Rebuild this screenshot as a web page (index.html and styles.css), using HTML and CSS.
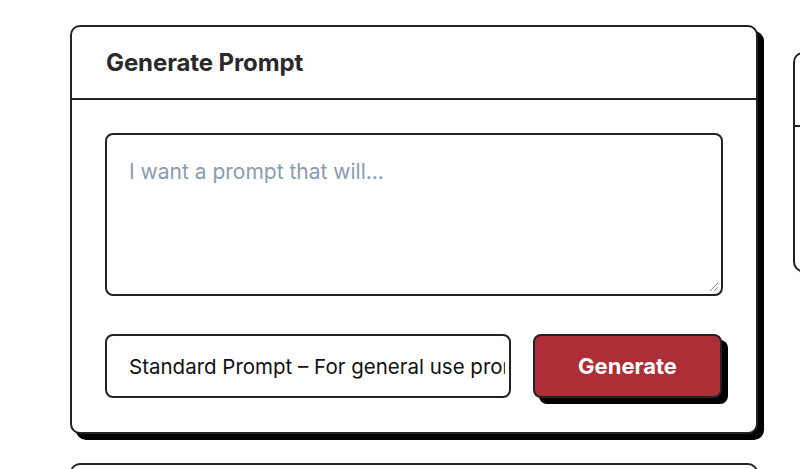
FILE: index.html
```html
<!DOCTYPE html>
<html>
<head>
<meta charset="utf-8">
<link rel="stylesheet" href="styles.css">
</head>
<body>
<div class="page">
  <div class="row">
    <section class="card main">
      <header class="card-head"><h2>Generate Prompt</h2></header>
      <div class="card-body">
        <div class="textarea"><span class="placeholder">I want a prompt that will...</span><span class="grip"></span></div>
        <div class="controls">
          <div class="select"><span>Standard Prompt – For general use prompts</span></div>
          <button class="btn">Generate</button>
        </div>
      </div>
    </section>
    <section class="card side">
      <header class="card-head side-head"></header>
    </section>
  </div>
  <section class="card lower"></section>
</div>
</body>
</html>
```
FILE: styles.css
```css
* { box-sizing: border-box; }
html, body { margin: 0; padding: 0; background: #fff; overflow: hidden; }
body { font-family: Inter, "Noto Sans", sans-serif; color: #222; }
.page { padding: 25px 0 0 70px; width: 800px; height: 469px; overflow: hidden; }
.row { display: flex; gap: 35px; align-items: flex-start; }
.card {
  background: #fff;
  border: 2px solid #222;
  border-radius: 10px;
  box-shadow: 6px 6px 0 #000;
  flex-shrink: 0;
}
.main { width: 688px; }
.card-head { border-bottom: 2px solid #222; height: 73px; display: flex; align-items: center; padding-left: 34px; }
.card-head h2 { margin: 0; font-size: 24px; font-weight: 700; color: #2a2a2a; letter-spacing: -0.1px; }
.card-body { padding: 33px 33px 34px; }
.textarea {
  position: relative;
  height: 163px;
  border: 2px solid #222;
  border-radius: 8px;
  padding: 24px 22px;
}
.placeholder { font-size: 21px; color: #8a9bb0; }
.grip {
  position: absolute; right: 3px; bottom: 3px; width: 8px; height: 8px;
  background: linear-gradient(135deg, transparent 45%, #888 45%, #888 55%, transparent 55%, transparent 70%, #888 70%, #888 80%, transparent 80%);
}
.controls { display: flex; gap: 22px; margin-top: 38px; }
.select {
  width: 406px; height: 64px;
  border: 2px solid #222; border-radius: 8px;
  padding: 0 4px 0 22px;
  display: flex; align-items: center;
  overflow: hidden; white-space: nowrap;
  font-size: 20.5px; color: #111;
}
.select span { overflow: hidden; display: block; width: 100%; }
.btn {
  width: 189px; height: 64px;
  background: #ad2e36; color: #fff;
  border: 2px solid #222; border-radius: 8px;
  box-shadow: 6px 6px 0 #000;
  font-family: Inter, "Noto Sans", sans-serif;
  font-size: 22px; font-weight: 700;
}
.side { width: 300px; margin-top: 27px; height: 220px; }
.side-head { height: 73px; padding: 0; }
.lower { width: 688px; height: 200px; margin-top: 29px; }
```
